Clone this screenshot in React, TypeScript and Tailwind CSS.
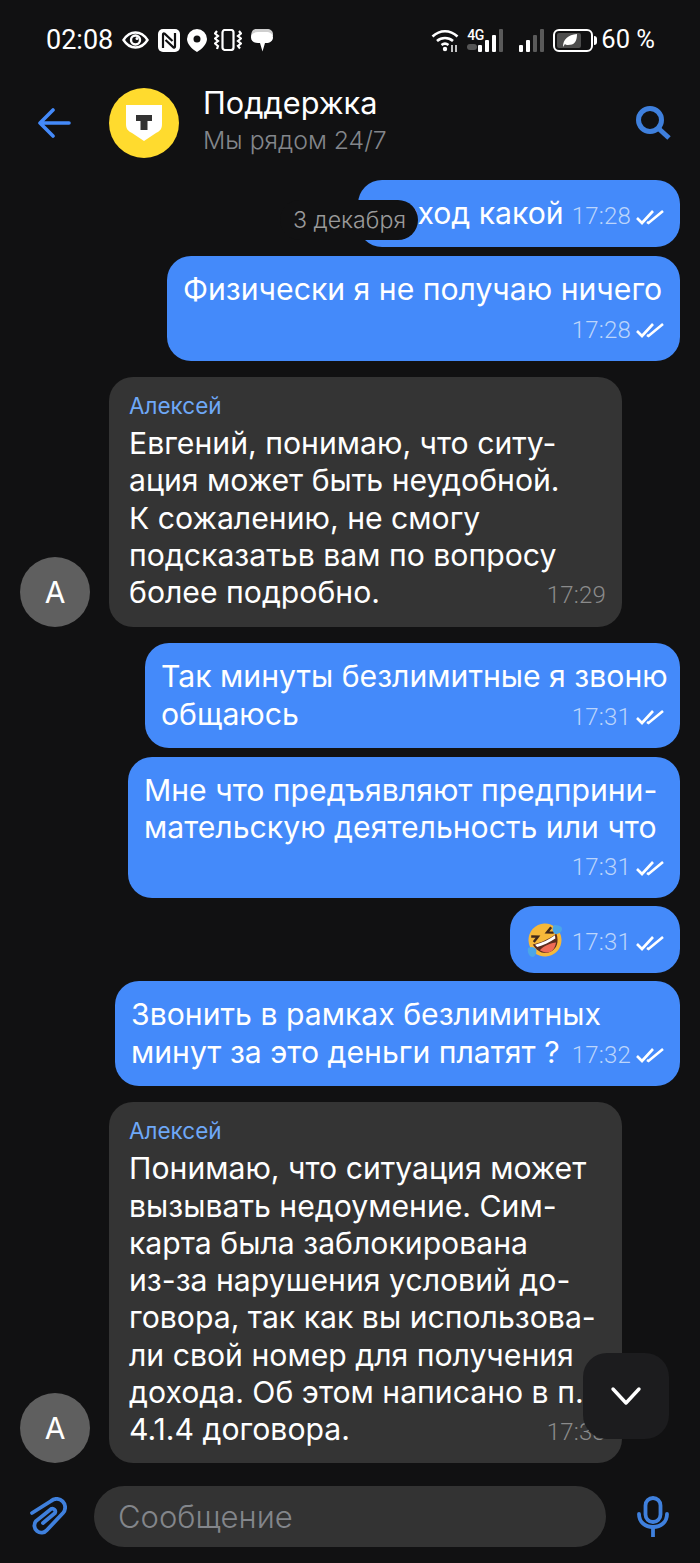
function Ticks() {
  return (
    <svg width="28" height="16" viewBox="0 0 28 16" fill="none" className="ml-[5px] shrink-0 text-white" stroke="currentColor" strokeWidth="2.600">
      <path d="M1 9l5 5L17 2" />
      <path d="M11 13l1.500 1L27 2" />
    </svg>
  );
}

function Time({ value, own = true }: { value: string; own?: boolean }) {
  return (
    <span className={"flex h-[37px] shrink-0 items-center pt-[6px] text-[24px] font-light leading-[31px] tracking-[0.2px] [font-family:Roboto,sans-serif] " + (own ? "text-[#bcd5fb]" : "text-[#8b8b8b]")}>
      {value}
      {own && <Ticks />}
    </span>
  );
}

function Own({ className, children }: { className: string; children: React.ReactNode }) {
  return (
    <div className={"self-end rounded-[24px] bg-[#448afa] px-4 py-[15px] text-[30.200px] font-normal leading-[37.250px] text-white " + className}>
      {children}
    </div>
  );
}

function Peer({ lines, time, last, className, bottom }: { lines: string[]; time: string; last: string; className: string; bottom: string }) {
  return (
    <div className={"flex items-end gap-[19px] pl-5 " + className}>
      <div className="flex h-[70px] w-[70px] shrink-0 items-center justify-center rounded-full bg-[#5f5f5f] text-[30px] text-white">А</div>
      <div className={"w-[513px] rounded-[24px] bg-[#343434] pt-[15px] pl-5 pr-4 text-[30.200px] leading-[37.250px] text-white " + bottom}>
        <div className="h-[33px] text-[22.500px] leading-[27px] text-[#6ea8f7]">Алексей</div>
        {lines.map((l) => (
          <div key={l} className="whitespace-nowrap">{l}</div>
        ))}
        <div className="flex justify-between whitespace-nowrap">
          <span>{last}</span>
          <Time value={time} own={false} />
        </div>
      </div>
    </div>
  );
}

function StatusLeft() {
  return (
    <div className="flex items-center text-white">
      <svg width="27" height="18" viewBox="0 0 27 18" fill="none" stroke="currentColor" strokeWidth="2.400">
        <path d="M1.500 9C5 3.500 9 1.500 13.500 1.500S22 3.500 25.500 9C22 14.500 18 16.500 13.500 16.500S5 14.500 1.500 9Z" />
        <circle cx="13.500" cy="9" r="4.500" />
        <circle cx="15" cy="7.500" r="1.500" fill="currentColor" stroke="none" />
      </svg>
      <svg width="22" height="23" viewBox="0 0 22 23" fill="none" className="ml-[9px]">
        <rect width="22" height="23" rx="5" fill="currentColor" />
        <path d="M5 19V5.500c0-1 .8-1.400 1.600-.8L14.500 12" stroke="#111112" strokeWidth="2.200" />
        <path d="M17 4v13.500c0 1-.8 1.400-1.600.8L7.500 11" stroke="#111112" strokeWidth="2.200" />
      </svg>
      <svg width="20" height="23" viewBox="0 0 20 23" className="ml-[7px]">
        <path fillRule="evenodd" fill="currentColor" d="M10 0a10 10 0 0 1 10 10c0 5-5 10-10 13C5 20 0 15 0 10A10 10 0 0 1 10 0Zm0 6.500a3.500 3.500 0 1 0 0 7 3.500 3.500 0 0 0 0-7Z" />
      </svg>
      <svg width="28" height="22" viewBox="0 0 28 22" fill="none" stroke="currentColor" strokeWidth="2.200" className="ml-[7px]">
        <rect x="8.500" y="1" width="11" height="20" rx="2.500" />
        <path d="M3 2L1 4.500l3 2.500-3 2.500 3 2.500-3 2.500 3 2.500L3 20" />
        <path d="M25 2l2 2.500-3 2.500 3 2.500-3 2.500 3 2.500-3 2.500 2 2.500" />
      </svg>
      <svg width="23" height="23" viewBox="0 0 23 23" className="ml-[8px]">
        <path fill="currentColor" opacity=".8" d="M6 0h11c3.500 0 6 2 6 5v2H5C3 7 2 8 1 9c0-5 1-9 5-9Z" />
        <path fill="currentColor" d="M8 3h8c4 0 7 2 7 5.500S20 14 16 14h-1l-2.500 8.500L10 14H8c-4 0-7-2-7-5.500S4 3 8 3Z" />
      </svg>
    </div>
  );
}

function Bars({ dim }: { dim: number }) {
  const heights = [7, 12, 17, 23];
  return (
    <div className="flex items-end gap-[3px]">
      {heights.map((h, i) => (
        <div key={h} className={"w-[4px] rounded-[1px] " + (i >= dim ? "bg-[#5a5a5a]" : "bg-white")} style={{ height: h }} />
      ))}
    </div>
  );
}

function StatusRight() {
  return (
    <div className="flex items-center text-white">
      <svg width="29" height="24" viewBox="0 0 29 24" fill="none" stroke="currentColor" strokeWidth="2.600">
        <path d="M1.500 8.500C9 1.500 19 1.500 26.500 8.500" />
        <path d="M6 13C10.500 9 17.500 9 22 13" />
        <path d="M10.500 17c2-1.500 5-1.500 7 0" />
        <circle cx="14" cy="21" r="2.200" fill="currentColor" stroke="none" />
        <path d="M21 17v7M25 17v7" stroke="white" strokeWidth="1.500" />
      </svg>
      <div className="ml-[7px] flex h-[24px] w-[11px] flex-col text-[14px] font-medium leading-[14px] tracking-[-0.5px]">
        <span>4G</span>
        <span className="mt-[2px] h-[6px] w-[10px] rounded-sm bg-[#555]" />
      </div>
      <Bars dim={3} />
      <div className="ml-4">
        <Bars dim={2} />
      </div>
      <div className="ml-[9px] flex h-[23px] w-[40px] items-center rounded-[6px] border-2 border-white p-[2px]">
        <div className="flex h-full w-[24px] items-center justify-center rounded-[2px] bg-[#4d4d4d]">
          <svg width="15" height="13" viewBox="0 0 15 13" fill="white">
            <path d="M1 13C1 5 6 1 15 0c0 8-3 11-9 11-1.500 0-2.500-.4-3-1L1 13Z" />
          </svg>
        </div>
      </div>
      <div className="ml-px h-[9px] w-[3px] rounded-r-sm bg-white" />
      <span className="ml-1 whitespace-nowrap text-[25.500px] font-normal leading-none">60 %</span>
    </div>
  );
}

export default function App() {
  return (
    <div className="relative flex h-[1563px] w-[700px] flex-col overflow-hidden bg-[#111112] [font-family:Inter,Roboto,sans-serif]">
      {/* status bar */}
      <div className="flex h-[80px] shrink-0 items-center justify-between pl-[46px] pr-[45px] [font-family:Roboto,sans-serif]">
        <div className="flex items-center gap-[9px]">
          <span className="text-[27px] font-normal leading-none text-white">02:08</span>
          <StatusLeft />
        </div>
        <StatusRight />
      </div>

      {/* header */}
      <div className="flex h-[86px] shrink-0 items-center pl-[38px] pr-[29px]">
        <svg width="33" height="30" viewBox="0 0 33 30" fill="none" stroke="#448afa" strokeWidth="3.600" strokeLinecap="round" strokeLinejoin="round" className="shrink-0">
          <path d="M31 15H3M15 2L2 15l13 13" />
        </svg>
        <div className="ml-[38px] flex h-[70px] w-[70px] shrink-0 items-center justify-center rounded-full bg-[#ffdb2e]">
          <svg width="36" height="36" viewBox="0 0 36 36">
            <path fill="white" d="M0 0h36v19c0 5-2 7-6 9l-12 8-12-8c-4-2-6-4-6-9Z" />
            <path fill="#333" d="M10 10h16v6h-4.500v9h-7v-9H10Z" />
          </svg>
        </div>
        <div className="ml-[24px] flex flex-1 flex-col">
          <span className="text-[30.700px] leading-[35px] text-white">Поддержка</span>
          <span className="text-[24.800px] font-light leading-[41px] text-[#83868b]">Мы рядом 24/7</span>
        </div>
        <svg width="36" height="36" viewBox="0 0 36 36" fill="none" stroke="#3f80dd" strokeWidth="5" className="shrink-0">
          <circle cx="15" cy="15" r="11.500" />
          <path d="M23 23l11 10" />
        </svg>
      </div>

      {/* messages */}
      <div className="mt-[14px] flex min-h-0 flex-1 flex-col pr-5">
        <Own className="w-[322px]">
          <div className="flex justify-end whitespace-nowrap">
            <span>доход какой</span>
            <span className="ml-2"><Time value="17:28" /></span>
          </div>
        </Own>
        <Own className="mt-[9px] w-[513px]">
          <div className="whitespace-nowrap">Физически я не получаю ничего</div>
          <div className="flex justify-end"><Time value="17:28" /></div>
        </Own>
        <Peer
          className="mt-[16.700px]"
          bottom="pb-4"
          lines={["Евгений, понимаю, что ситу-", "ация может быть неудобной.", "К сожалению, не смогу", "подсказатьв вам по вопросу"]}
          last="более подробно."
          time="17:29"
        />
        <Own className="mt-4 w-[535px]">
          <div className="whitespace-nowrap">Так минуты безлимитные я звоню</div>
          <div className="flex justify-between whitespace-nowrap">
            <span>общаюсь</span>
            <Time value="17:31" />
          </div>
        </Own>
        <Own className="mt-[9px] w-[552px]">
          <div className="whitespace-nowrap">Мне что предъявляют предприни-</div>
          <div className="whitespace-nowrap">мательскую деятельность или что</div>
          <div className="flex justify-end"><Time value="17:31" /></div>
        </Own>
        <Own className="mt-2 w-[170px]">
          <div className="flex items-center justify-between">
            <svg width="36" height="36" viewBox="0 0 36 36" className="ml-px">
              <g transform="rotate(-25 18 18)">
                <circle cx="18" cy="18" r="16.500" fill="#f6b83a" />
                <path d="M5 17c8 2 18 2 26 0-1 9-6 14-13 14S6 26 5 17Z" fill="#5d2d1e" />
                <path d="M9 25c5-2 13-2 18 0-3 4-6 6-9 6s-6-2-9-6Z" fill="#ee6a55" />
                <path d="M7 18c7 1.500 15 1.500 22 0l-1 3c-6 1-14 1-20 0Z" fill="white" />
                <path d="M7 9l6 3-6 3M29 9l-6 3 6 3" fill="none" stroke="#40281c" strokeWidth="2.400" />
              </g>
              <path d="M27 3c4 0 8 1 8 4 0 3-3 5-7 5-3-3-3-6-1-9Z" fill="#4aa6e8" />
              <path d="M1 26c3-2 6-1 8 1 1 3 0 7-3 8-4 0-6-5-5-9Z" fill="#4aa6e8" />
            </svg>
            <Time value="17:31" />
          </div>
        </Own>
        <Own className="mt-2 w-[565px]">
          <div className="whitespace-nowrap">Звонить в рамках безлимитных</div>
          <div className="flex justify-between whitespace-nowrap">
            <span>минут за это деньги платят ?</span>
            <Time value="17:32" />
          </div>
        </Own>
        <Peer
          className="mt-[16.500px]"
          bottom="pb-[15px]"
          lines={[
            "Понимаю, что ситуация может",
            "вызывать недоумение. Сим-",
            "карта была заблокирована",
            "из-за нарушения условий до-",
            "говора, так как вы использова-",
            "ли свой номер для получения",
            "дохода. Об этом написано в п.",
          ]}
          last="4.1.4 договора."
          time="17:33"
        />
      </div>

      {/* composer */}
      <div className="mb-4 flex h-[61px] shrink-0 items-center pl-[30px] pr-[31px]">
        <svg width="37" height="39" viewBox="0 0 37 39" fill="none" stroke="#3f80dd" strokeWidth="3.800" strokeLinecap="round" className="shrink-0">
          <path d="M2 16L21 4a8.500 8.500 0 0 1 12 12L17 33a7 7 0 0 1-11-9L21 12a3 3 0 0 1 4 4L13 26" />
        </svg>
        <div className="ml-[27px] flex h-[61px] w-[512px] items-center rounded-full bg-[#333333] pl-6 pt-[2px] text-[31px] font-light text-[#83868b]">Сообщение</div>
        <svg width="32" height="41" viewBox="0 0 32 41" fill="none" className="ml-[31px] shrink-0">
          <rect x="8.500" y="2" width="15" height="24" rx="7.500" stroke="#3f80dd" strokeWidth="3.800" />
          <path d="M2 18c0 8 6 13 14 13s14-5 14-13" stroke="#3f80dd" strokeWidth="3.800" strokeLinecap="round" />
          <path d="M16 31v10" stroke="#3f80dd" strokeWidth="3.800" />
        </svg>
      </div>

      {/* sticky date */}
      <div className="absolute left-[280px] top-[200px] flex h-[40px] w-[138px] items-center justify-end rounded-full bg-[#111112] pr-3 text-[23.200px] font-light text-[#9a9a9a]">3 декабря</div>

      {/* scroll to bottom */}
      <div className="absolute left-[583px] top-[1353px] flex h-[86px] w-[86px] items-center justify-center rounded-[24px] bg-[#1c1c1e]">
        <svg width="32" height="20" viewBox="0 0 32 20" fill="none" stroke="white" strokeWidth="3.400" strokeLinecap="round" strokeLinejoin="round">
          <path d="M3 3l13 14L29 3" />
        </svg>
      </div>
    </div>
  );
}
